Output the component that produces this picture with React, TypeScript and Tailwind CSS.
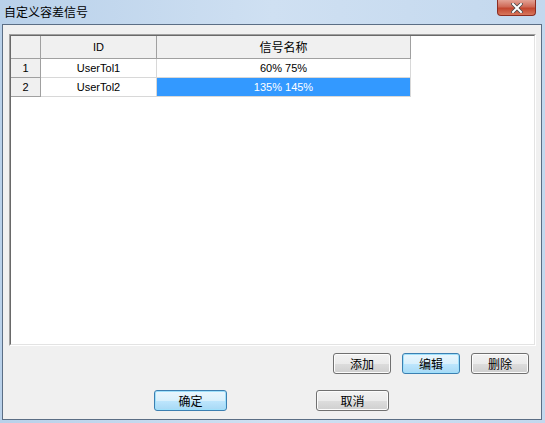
import { ReactNode } from "react";

const rows = [
  { no: "1", id: "UserTol1", name: "60% 75%", selected: false },
  { no: "2", id: "UserTol2", name: "135% 145%", selected: true },
];

function Button({ children, focus, w }: { children: ReactNode; focus?: boolean; w: string }) {
  return (
    <button
      className={`${w} h-[21px] rounded-[3px] border text-[12px] leading-none text-black ${
        focus
          ? "border-[#3c7fb1] bg-[linear-gradient(#eaf6fd_0%,#d9f0fc_50%,#bee6fd_51%,#a7d9f5_100%)] shadow-[inset_0_0_0_1px_#9fe0fb]"
          : "border-[#707070] bg-[linear-gradient(#f2f2f2_0%,#ebebeb_50%,#dddddd_51%,#cfcfcf_100%)] shadow-[inset_0_0_0_1px_#fcfcfc]"
      }`}
    >
      {children}
    </button>
  );
}

export default function App() {
  return (
    <div className="w-[545px] h-[423px] flex flex-col bg-[linear-gradient(90deg,#b9d1ea,#cfe0f2_50%,#c3d8ee)] font-['Noto_Sans_CJK_SC','Liberation_Sans',sans-serif] overflow-hidden">
      {/* title bar */}
      <div className="h-[24px] flex items-start justify-between pl-[4px] pr-[9px]">
        <span className="mt-[4px] text-[12px] leading-[16px] text-black">自定义容差信号</span>
        <div className="w-[39px] h-[16px] rounded-b-[4px] border border-t-0 border-[#8b2d22] bg-[linear-gradient(#e3a295,#cf6a57_45%,#c2462f_55%,#d8775c)] flex items-center justify-center">
          <svg width="12" height="10" viewBox="0 0 12 10">
            <path d="M2 1 L10 9 M10 1 L2 9" stroke="#4a4a4a" strokeWidth="3.6" strokeLinecap="square" />
            <path d="M2 1 L10 9 M10 1 L2 9" stroke="#ffffff" strokeWidth="2" strokeLinecap="square" />
          </svg>
        </div>
      </div>

      {/* client area */}
      <div className="ml-[2px] w-[540px] h-[396px] border border-[#5b6e85] bg-[#f0f0f0] flex flex-col pt-[9px] pl-[6px]">
        {/* grid */}
        <div className="w-[527px] h-[312px] border-t border-l border-[#a0a0a0] border-r-white border-b-white border-r border-b">
          <div className="w-full h-full border-t border-l border-[#696969] border-r border-b border-r-[#e3e3e3] border-b-[#e3e3e3] bg-white text-[11px] text-black">
            <div className="grid grid-cols-[30px_116px_254px] font-['Liberation_Sans','Noto_Sans_CJK_SC',sans-serif]">
              <div className="h-[23px] bg-[#f0f0f0] border-r border-b border-[#a0a0a0]" />
              <div className="h-[23px] bg-[#f0f0f0] border-r border-b border-[#a0a0a0] flex items-center justify-center">ID</div>
              <div className="h-[23px] bg-[#f0f0f0] border-r border-b border-[#a0a0a0] flex items-center justify-center text-[12px] font-['Noto_Sans_CJK_SC',sans-serif]">
                信号名称
              </div>
              {rows.map((r) => (
                <div key={r.no} className="contents">
                  <div className="h-[19px] bg-[#f0f0f0] border-r border-b border-[#a0a0a0] flex items-center justify-center">{r.no}</div>
                  <div className="h-[19px] border-r border-b border-[#d8d8d8] flex items-center justify-center">{r.id}</div>
                  <div
                    className={`h-[19px] border-r border-b border-[#d8d8d8] flex items-center justify-center ${
                      r.selected ? "bg-[#3399ff] text-white" : ""
                    }`}
                  >
                    {r.name}
                  </div>
                </div>
              ))}
            </div>
          </div>
        </div>

        {/* action buttons */}
        <div className="mt-[7px] w-[527px] flex justify-end gap-[11px] pr-[7px]">
          <Button w="w-[58px]">添加</Button>
          <Button w="w-[58px]" focus>
            编辑
          </Button>
          <Button w="w-[58px]">删除</Button>
        </div>

        {/* dialog buttons */}
        <div className="mt-[16px] flex pl-[145px] gap-[89px]">
          <Button w="w-[73px]" focus>
            确定
          </Button>
          <Button w="w-[73px]">取消</Button>
        </div>
      </div>
    </div>
  );
}
